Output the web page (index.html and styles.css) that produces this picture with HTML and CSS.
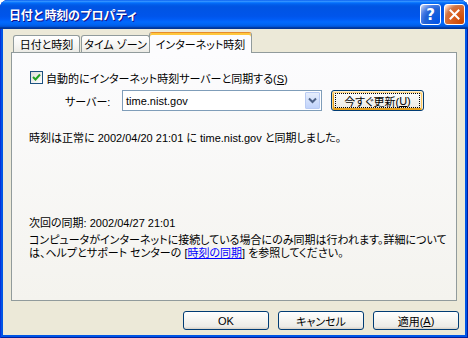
FILE: index.html
```html
<!DOCTYPE html>
<html lang="ja">
<head>
<meta charset="utf-8">
<title>日付と時刻のプロパティ</title>
<link rel="stylesheet" href="styles.css">
</head>
<body>
<div class="window">
  <div class="titlebar">
    <span class="title">日付と時刻のプロパティ</span>
    <div class="caption-buttons">
      <span class="cap-btn help">?</span>
      <span class="cap-btn close">
        <svg width="11" height="11" viewBox="0 0 11 11"><path d="M1.5 1.5 L9.5 9.5 M9.5 1.5 L1.5 9.5" stroke="#fff" stroke-width="2" fill="none" stroke-linecap="square"/></svg>
      </span>
    </div>
  </div>
  <div class="client">
    <div class="tabs">
      <span class="tab tab-date">日付と時刻</span>
      <span class="tab tab-zone">タイム ゾーン</span>
      <span class="tab tab-net active">インターネット時刻</span>
    </div>
    <div class="panel">
      <label class="check-row">
        <span class="checkbox">
          <svg width="9" height="9" viewBox="0 0 9 9"><path d="M1 4 L3.5 6.5 L8 1.5" stroke="#21A121" stroke-width="2" fill="none"/></svg>
        </span>
        <span>自動的にインターネット時刻サーバーと同期する(<u>S</u>)</span>
      </label>
      <div class="server-row">
        <span class="server-label">サーバー:</span>
        <div class="combo">
          <span class="combo-text">time.nist.gov</span>
          <span class="combo-btn">
            <svg width="9" height="7" viewBox="0 0 9 7"><path d="M1 1.5 L4.5 5 L8 1.5" stroke="#4D6185" stroke-width="2" fill="none"/></svg>
          </span>
        </div>
        <button class="btn btn-update"><span class="focus">今すぐ更新(<u>U</u>)</span></button>
      </div>
      <p class="status">時刻は正常に 2002/04/20 21:01 に time.nist.gov と同期しました。</p>
      <p class="next">次回の同期: 2002/04/27 21:01</p>
      <p class="info">コンピュータがインターネットに接続している場合にのみ同期は行われます。詳細について<br>は、ヘルプとサポート センターの [<a class="link" href="#">時刻の同期</a>] を参照してください。</p>
    </div>
    <div class="buttons">
      <button class="btn btn-dlg">OK</button>
      <button class="btn btn-dlg">キャンセル</button>
      <button class="btn btn-dlg">適用(<u>A</u>)</button>
    </div>
  </div>
</div>
</body>
</html>
```
FILE: styles.css
```css
* { box-sizing: border-box; }
body {
  margin: 0;
  font-family: "Liberation Sans", "Noto Sans CJK JP", sans-serif;
  font-size: 11px;
  color: #000;
  font-feature-settings: "palt";
  white-space: nowrap;
}
.window {
  width: 468px;
  height: 338px;
  display: flex;
  flex-direction: column;
  background: #0055E5;
  border-radius: 8px 8px 0 0;
  overflow: hidden;
  box-shadow: inset 1px 0 #0831D9, inset -1px 0 #001EA0, inset 0 -1px #001EA0;
}
.titlebar {
  height: 29px;
  flex: none;
  display: flex;
  align-items: center;
  justify-content: space-between;
  padding: 0 3px 0 9px;
  background: linear-gradient(to bottom, #0058EE 0%, #3A93FF 4%, #288EFF 6%, #127DFF 8%, #036FFC 10%, #0262EE 14%, #0057E5 20%, #0054E3 24%, #0055EB 56%, #005BF5 66%, #026AFE 76%, #0062EF 86%, #0052D6 92%, #0040AB 94%, #003092 100%);
}
.title {
  color: #fff;
  font-weight: bold;
  font-size: 12px;
  letter-spacing: -0.2px;
  font-feature-settings: normal;
  text-shadow: 1px 1px #0F1089;
}
.caption-buttons {
  display: flex;
  gap: 3px;
}
.cap-btn {
  width: 21px;
  height: 21px;
  border: 1px solid #fff;
  border-radius: 3px;
  display: flex;
  align-items: center;
  justify-content: center;
}
.help {
  background: radial-gradient(circle at 90% 90%, #0054E9 0%, #2263D5 55%, #4479E4 70%, #A3BBEC 90%, #fff 100%);
  color: #fff;
  font-family: "DejaVu Sans", sans-serif;
  font-weight: bold;
  font-size: 15px;
}
.close {
  background: radial-gradient(circle at 90% 90%, #CC4600 0%, #DC6527 55%, #CD7546 70%, #FFCCB2 90%, #fff 100%);
}
.client {
  flex: 1;
  margin: 0 3px 3px 3px;
  background: #ECE9D8;
  padding: 3px 8px 0 8px;
  display: flex;
  flex-direction: column;
}
.tabs {
  display: flex;
  align-items: flex-end;
  height: 20px;
  padding-left: 2px;
  position: relative;
  z-index: 1;
}
.tab {
  height: 17px;
  border: 1px solid #919B9C;
  border-bottom: none;
  border-radius: 3px 3px 0 0;
  background: linear-gradient(to bottom, #fff 0%, #F7F7F5 50%, #ECEBE6 100%);
  display: flex;
  align-items: center;
  justify-content: center;
  margin-right: 1px;
}
.tab-date { width: 67px; }
.tab-zone { width: 69px; }
.tab.active {
  width: 103px;
  height: 21px;
  margin: 0 0 -1px -2px;
  background: #FCFCFE;
  border-top: 1px solid #E68B2C;
  box-shadow: inset 0 2px #FFC73C;
  padding-top: 1px;
}
.panel {
  height: 249px;
  flex: none;
  border: 1px solid #919B9C;
  background: linear-gradient(to bottom, #FCFCFE, #F4F3EE);
  padding: 0 0 0 18px;
}
.check-row {
  display: flex;
  align-items: center;
  gap: 3px;
  margin-top: 18px;
  height: 13px;
}
.checkbox {
  width: 13px;
  height: 13px;
  border: 1px solid #1C5180;
  background: linear-gradient(135deg, #DCDCD7, #fff);
  display: flex;
  align-items: center;
  justify-content: center;
}
.server-row {
  display: flex;
  align-items: center;
  margin-top: 6px;
  height: 21px;
}
.server-label {
  margin-left: 35px;
  width: 57px;
}
.combo {
  width: 200px;
  height: 21px;
  border: 1px solid #7F9DB9;
  background: #fff;
  display: flex;
  align-items: center;
  justify-content: space-between;
  padding: 1px;
}
.combo-text {
  padding-left: 2px;
}
.combo-btn {
  width: 15px;
  height: 17px;
  border: 1px solid #B9CBF3;
  border-radius: 1px;
  background: linear-gradient(to bottom, #E6EEFC, #C1D3FB);
  display: flex;
  align-items: center;
  justify-content: center;
}
.btn {
  font: inherit;
  color: #000;
  border: 1px solid #003C74;
  border-radius: 3px;
  background: linear-gradient(to bottom, #fff 0%, #F4F4F0 50%, #ECEBE6 86%, #D6D0C5 100%);
  padding: 0;
  display: flex;
  align-items: center;
  justify-content: center;
}
.btn-update {
  width: 93px;
  height: 21px;
  margin-left: 9px;
  box-shadow: inset -1px 1px #FFF0CF, inset 1px 2px #FDD889, inset -2px 2px #FBC761, inset 2px -2px #E5A01A;
}
.focus {
  border: 1px dotted #000;
  width: 85px;
  height: 15px;
  display: flex;
  align-items: center;
  justify-content: center;
}
.status {
  margin: 20px 0 0 -1px;
  line-height: 14px;
}
.next {
  margin: 71px 0 0 -1px;
  line-height: 14px;
}
.info {
  margin: 4px 0 0 -1px;
  line-height: 13px;
}
.link {
  color: #0000FF;
  text-decoration: underline;
}
.buttons {
  display: flex;
  justify-content: flex-end;
  gap: 9px;
  margin: 10px -2px 0 0;
}
.btn-dlg {
  width: 86px;
  height: 19px;
}
```
